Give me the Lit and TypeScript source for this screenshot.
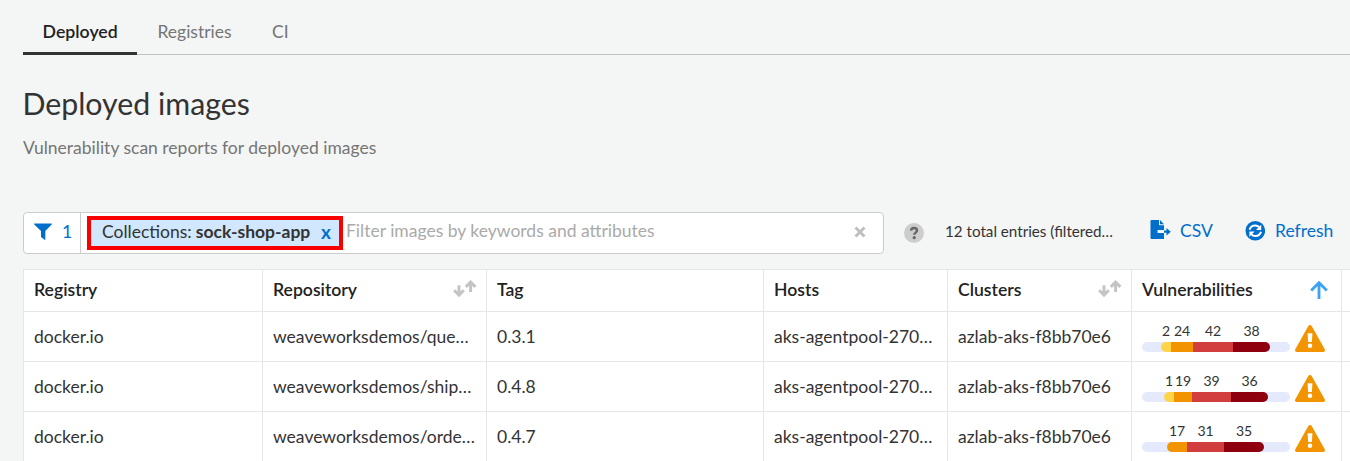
import { LitElement, html, css, svg } from "lit";
import { customElement, property } from "lit/decorators.js";

type Segment = { level: string; count: string; width: number };
type ImageRow = {
  registry: string;
  repository: string;
  tag: string;
  hosts: string;
  clusters: string;
  offset: number;
  segments: Segment[];
};

const rows: ImageRow[] = [
  {
    registry: "docker.io",
    repository: "weaveworksdemos/que…",
    tag: "0.3.1",
    hosts: "aks-agentpool-270…",
    clusters: "azlab-aks-f8bb70e6",
    offset: 19,
    segments: [
      { level: "low", count: "2", width: 10 },
      { level: "medium", count: "24", width: 22 },
      { level: "high", count: "42", width: 40 },
      { level: "critical", count: "38", width: 37 },
    ],
  },
  {
    registry: "docker.io",
    repository: "weaveworksdemos/ship…",
    tag: "0.4.8",
    hosts: "aks-agentpool-270…",
    clusters: "azlab-aks-f8bb70e6",
    offset: 22,
    segments: [
      { level: "low", count: "1", width: 10 },
      { level: "medium", count: "19", width: 18 },
      { level: "high", count: "39", width: 39 },
      { level: "critical", count: "36", width: 37 },
    ],
  },
  {
    registry: "docker.io",
    repository: "weaveworksdemos/orde…",
    tag: "0.4.7",
    hosts: "aks-agentpool-270…",
    clusters: "azlab-aks-f8bb70e6",
    offset: 25,
    segments: [
      { level: "medium", count: "17", width: 20 },
      { level: "high", count: "31", width: 37 },
      { level: "critical", count: "35", width: 40 },
    ],
  },
];

const upArrow = svg`<path d="M6 12V2.600M1.200 6.900 6 2.100l4.800 4.800" fill="none" stroke="currentColor" stroke-width="3"/>`;

const sortIcon = html`<svg class="sort" width="24" height="18" viewBox="0 0 24 18">
  <g transform="translate(11.6 0)">${upArrow}</g>
  <g transform="translate(0 17.2) scale(1 -1)">${upArrow}</g>
</svg>`;

const ascIcon = html`<svg class="asc" width="18" height="18" viewBox="0 0 18 18">
  <path d="M9 18V2.500M1.200 9.400 9 1.700l7.800 7.700" fill="none" stroke="currentColor" stroke-width="2.800"/>
</svg>`;

@customElement("severity-bar")
export class SeverityBar extends LitElement {
  @property({ type: Number }) offset = 0;
  @property({ attribute: false }) segments: Segment[] = [];

  static styles = css`
    :host { display: flex; flex-direction: column; width: 148px; }
    .counts { display: flex; height: 17px; font-size: 14px; line-height: 17px; margin-bottom: 3px; }
    .count { display: flex; justify-content: center; white-space: nowrap; }
    .track { display: flex; height: 10px; border-radius: 5px; background: #e4e9fc; }
    .segment:first-child { border-radius: 5px 0 0 5px; }
    .segment:last-child { border-radius: 0 5px 5px 0; }
    .low { background: #ffd547; }
    .medium { background: #f29400; }
    .high { background: #d23d3d; }
    .critical { background: #8e000e; }
  `;

  render() {
    return html`
      <div class="counts" style="padding-left:${this.offset}px">
        ${this.segments.map((s) => html`<span class="count" style="width:${s.width}px">${s.count}</span>`)}
      </div>
      <div class="track" style="padding-left:${this.offset}px">
        ${this.segments.map((s) => html`<span class="segment ${s.level}" style="width:${s.width}px"></span>`)}
      </div>
    `;
  }
}

@customElement("app-root")
export class AppRoot extends LitElement {
  static styles = css`
    :host {
      display: block;
      box-sizing: border-box;
      height: 461px;
      overflow: hidden;
      padding-left: 23px;
      background: #f4f5f5;
      color: #333;
      font-family: Lato, "Liberation Sans", sans-serif;
      font-size: 17.5px;
    }
    svg { display: block; flex: none; }
    .tabs { display: flex; height: 54px; border-bottom: 1px solid #c3c5c5; margin-bottom: 29px; color: #757575; }
    .tab { box-sizing: border-box; height: 55px; padding: 21px 20px 0 20.4px; line-height: 22px; white-space: nowrap; }
    .tab.active { width: 114px; padding-left: 19.6px; border-bottom: 3px solid #333; color: #222; font-weight: 600; font-size: 17.7px; }
    .title { margin: 0 0 0 -0.6px; font-size: 30.3px; line-height: 38px; font-weight: 400; white-space: nowrap; }
    .subtitle { margin: 14px 0 0; height: 24px; line-height: 24px; color: #757575; white-space: nowrap; }
    .toolbar { display: flex; align-items: center; height: 42px; margin-top: 52px; white-space: nowrap; }
    .search { display: flex; box-sizing: border-box; width: 861px; height: 42px; background: #fff; border: 1px solid #ccc; border-radius: 4px; }
    .filters { display: flex; align-items: center; box-sizing: border-box; width: 57px; padding: 0 0 2px 10px; gap: 10px; border-right: 1px solid #ccc; color: #006fcc; }
    .filters span { padding-bottom: 2px; }
    .chip { display: flex; align-items: center; box-sizing: border-box; width: 256px; height: 34px; margin: 3px 0 0 6px; padding: 0 8px 3px 11px; border: 4px solid #f90000; background: #d1e7fd; }
    .chip b { font-weight: 700; margin-left: 4px; }
    .chip .remove { margin-left: auto; color: #006fcc; font-weight: 700; font-size: 19px; line-height: 20px; }
    .placeholder { flex: 1; padding-left: 3px; line-height: 35px; color: #aaa; }
    .clear { margin: 13px 17px 0 0; }
    .help { margin-left: 20px; }
    .total { width: 170px; margin-left: 21px; font-size: 15.2px; padding-bottom: 4px; }
    .action { display: flex; align-items: center; gap: 10px; padding-bottom: 5px; color: #006fcc; }
    .csv { margin-left: 35px; width: 95px; gap: 9px; }
    .csv svg { margin-bottom: 2px; }
    .table { display: grid; grid-template-columns: 239px 224px 277px 184px 184px 210px 1fr; margin-top: 15px; border: solid #e6e6e6; border-width: 1px 0 0 1px; background: #fff; }
    .cell { display: flex; align-items: center; box-sizing: border-box; height: 50px; padding: 0 10px 1px; border: solid #e6e6e6; border-width: 0 1px 1px 0; white-space: nowrap; }
    .head { height: 42px; padding-bottom: 3px; font-weight: 600; font-size: 17.6px; color: #222; }
    .sort { margin: 0 -1px 0 auto; color: #c4c4c4; }
    .asc { margin: 1px 3px 0 auto; color: #3ba3f5; }
    .vuln { gap: 5px; align-items: flex-end; padding-bottom: 9px; }
  `;

  render() {
    return html`
      <nav class="tabs">
        <span class="tab active">Deployed</span>
        <span class="tab">Registries</span>
        <span class="tab">CI</span>
      </nav>
      <h1 class="title">Deployed images</h1>
      <p class="subtitle">Vulnerability scan reports for deployed images</p>

      <div class="toolbar">
        <div class="search">
          <div class="filters">
            <svg width="18" height="18" viewBox="0 0 18 18">
              <path d="M.7.5h16.600c.5 0 .7.6.4 1L11.300 8v9.200L7 14V8L.3 1.500C0 1.100.2.5.7.5Z" fill="currentColor"/>
            </svg>
            <span>1</span>
          </div>
          <div class="chip"><span>Collections:</span><b>sock-shop-app</b><span class="remove">x</span></div>
          <span class="placeholder">Filter images by keywords and attributes</span>
          <svg class="clear" width="12" height="12" viewBox="0 0 12 12">
            <path d="m1.500 1.500 9 9m0-9-9 9" stroke="#bfbfbf" stroke-width="3"/>
          </svg>
        </div>
        <svg class="help" width="20" height="20" viewBox="0 0 20 20">
          <circle cx="10" cy="10" r="10" fill="#cdcdcd"/>
          <path d="M7 7.700C7.200 5.700 8.300 5 10 5s3 1 3 2.600c0 2.100-2.700 2-2.700 4.200" fill="none" stroke="#666" stroke-width="2.400"/>
          <circle cx="10.200" cy="14.700" r="1.600" fill="#666"/>
        </svg>
        <span class="total">12 total entries (filtered…</span>
        <span class="action csv">
          <svg width="21" height="20" viewBox="0 0 21 20">
            <path d="M1.500 0h7.500v5.200h5V10H7.500v3H14v6H1.500a1 1 0 0 1-1-1V1a1 1 0 0 1 1-1Z" fill="currentColor"/>
            <path d="M10 0l4 4.200h-4Z" fill="currentColor"/>
            <path d="M14 10.600h2.500V8l4.300 3.700-4.300 3.700v-2.700H14Z" fill="currentColor"/>
          </svg>
          <span>CSV</span>
        </span>
        <span class="action">
          <svg width="20" height="20" viewBox="0 0 20 20">
            <circle cx="10.300" cy="9.800" r="9.800" fill="currentColor"/>
            <path d="M4.600 8.800c.7-2.500 2.900-4.200 5.600-4.200 1.700 0 3.200.7 4.300 1.900M16 10.800c-.7 2.500-2.900 4.200-5.600 4.200-1.700 0-3.200-.7-4.300-1.900" fill="none" stroke="#fff" stroke-width="2"/>
            <path d="M16.200 3.800V9h-5.200ZM4.400 15.800v-5.200h5.200Z" fill="#fff"/>
          </svg>
          <span>Refresh</span>
        </span>
      </div>

      <div class="table">
        <div class="cell head">Registry</div>
        <div class="cell head">Repository${sortIcon}</div>
        <div class="cell head">Tag</div>
        <div class="cell head">Hosts</div>
        <div class="cell head">Clusters${sortIcon}</div>
        <div class="cell head">Vulnerabilities${ascIcon}</div>
        <div class="cell head"></div>
        ${rows.map(
          (r) => html`
            <div class="cell">${r.registry}</div>
            <div class="cell">${r.repository}</div>
            <div class="cell">${r.tag}</div>
            <div class="cell">${r.hosts}</div>
            <div class="cell">${r.clusters}</div>
            <div class="cell vuln">
              <severity-bar .offset=${r.offset} .segments=${r.segments}></severity-bar>
              <svg width="30" height="27" viewBox="0 0 30 27">
                <path d="M13.300 1a2 2 0 0 1 3.400 0l13 23.300c.7 1.300 0 2.700-1.500 2.700H1.800C.3 27-.4 25.600.3 24.300Z" fill="#f29400"/>
                <path d="M12.600 8.300h4.800l-.5 8.800h-3.800Z" fill="#fff"/>
                <circle cx="15" cy="20.700" r="2.300" fill="#fff"/>
              </svg>
            </div>
            <div class="cell"></div>
          `
        )}
      </div>
    `;
  }
}
